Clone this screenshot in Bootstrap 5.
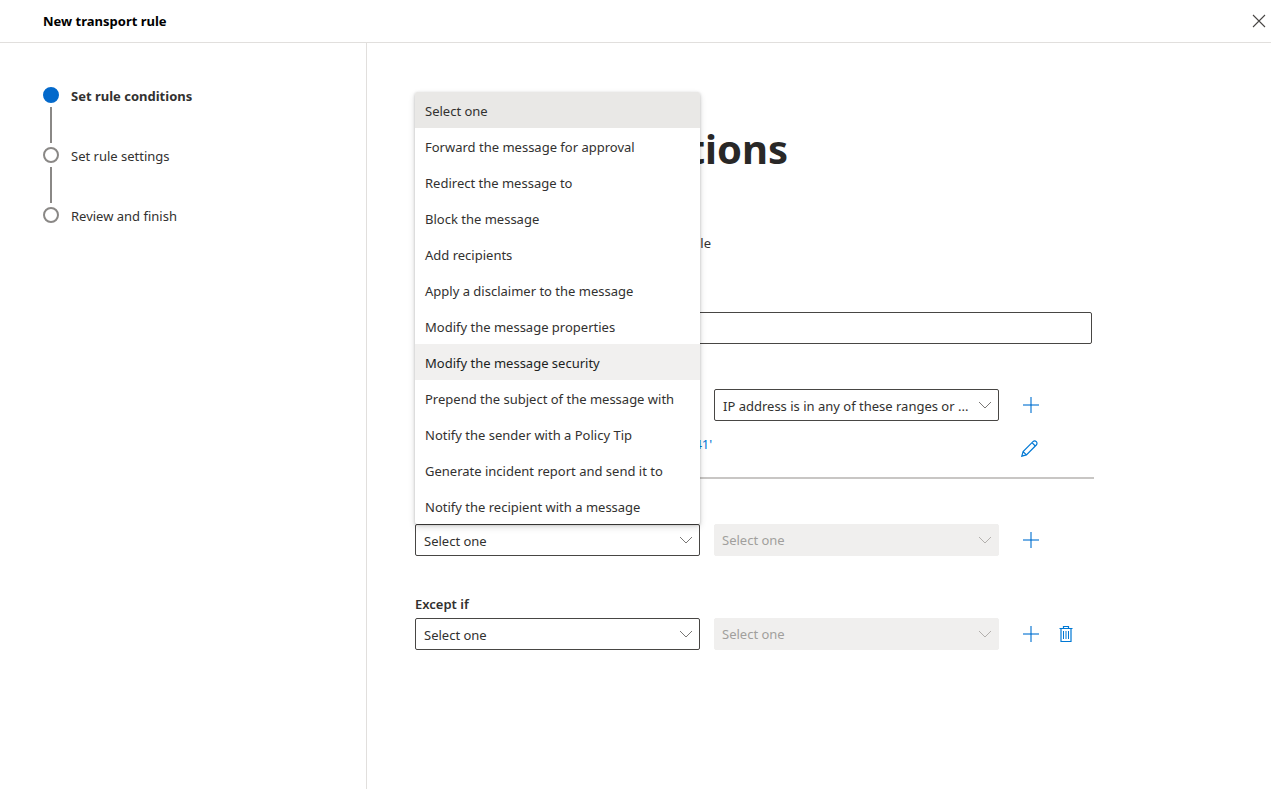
<!DOCTYPE html>
<html lang="en">
<head>
<meta charset="utf-8">
<meta name="viewport" content="width=device-width, initial-scale=1">
<title>New transport rule</title>
<link href="https://cdn.jsdelivr.net/npm/bootstrap@5.3.0/dist/css/bootstrap.min.css" rel="stylesheet">
<style>
  body { font-family: "Noto Sans", "Open Sans", sans-serif; font-size: 13px; line-height: 20px; color: #323130; background: #fff; }
  .topbar { height: 43px; border-bottom: 1px solid #e1dfdd; padding-left: 43px; padding-right: 4px; }
  .topbar h1 { font-size: 13px; line-height: 20px; font-weight: 700; color: #000; }
  .icon-btn { display: flex; padding: 0; border: 0; background: none; color: #0078d4; }
  .icon-btn.dismiss { color: #484644; }
  .sidebar { flex: 0 0 367px; border-right: 1px solid #e1dfdd; padding: 43px 43px 0; }
  .steps li { height: 60px; display: grid; grid-template-columns: 16px 1fr; column-gap: 12px; align-content: start; row-gap: 1px; }
  .steps a { color: #323130; text-decoration: none; }
  .steps .active { font-weight: 700; }
  .dot { width: 16px; height: 16px; margin-top: 1px; border: 2px solid #8a8886; border-radius: 50%; align-self: start; }
  .dot.filled { background: #0369cb; border-color: #0369cb; }
  .steps .bar-line { width: 2px; height: 36px; background: #8a8886; justify-self: center; }
  .pane { padding: 80px 48px 48px; }
  .form-area { max-width: 679px; }
  .form-area h2 { font-size: 40px; line-height: 52px; font-weight: 700; color: #292827; }
  .intro { margin: 58px 0 59px; }
  .field { height: 32px; border: 1px solid #484644; border-radius: 2px; padding: 0 8px; font-size: 13px; line-height: 20px; color: #323130; }
  .name-row { padding-right: 2px; margin-bottom: 45px; }
  .form-select.field { padding: 2px 26px 0 8px; background-size: 14px 14px; background-position: right 6px center;
    background-image: url("data:image/svg+xml,%3Csvg xmlns='http://www.w3.org/2000/svg' viewBox='0 0 14 14'%3E%3Cpath fill='none' stroke='%23797775' d='M1 4l6 6 6-6'/%3E%3C/svg%3E"); }
  .form-select.field:disabled { background-color: #f0efee; border-color: #f0efee; color: #a19f9d; opacity: 1; padding: 0 26px 0 7px;
    background-image: url("data:image/svg+xml,%3Csvg xmlns='http://www.w3.org/2000/svg' viewBox='0 0 14 14'%3E%3Cpath fill='none' stroke='%23b3b0ad' d='M1 4l6 6 6-6'/%3E%3C/svg%3E"); }
  .rule-grid { display: grid; grid-template-columns: 285px 285px 20px 20px; column-gap: 14px; align-items: center; }
  .rule-grid .second { grid-column: 2; }
  .rule-grid .add { justify-self: end; margin-right: -6px; }
  .summary { height: 58px; padding-top: 13px; padding-right: 56px; margin-bottom: 45px; border-bottom: 2px solid #c8c6c4; }
  .summary a { color: #0078d4; text-decoration: none; }
  .summary .icon-btn { padding-top: 6px; }
  .section-label { margin-top: 38px; line-height: 20px; }
  .option-menu { position: absolute; bottom: 100%; left: 0; width: 100%; border-radius: 2px; background: #fff;
    box-shadow: 0 3px 7px rgba(0,0,0,.14), 0 1px 3px rgba(0,0,0,.22); overflow: hidden; z-index: 10; }
  .option-menu .dropdown-item { height: 36px; padding: 2px 10px 0; line-height: 20px; color: #323130; }
  .option-menu .dropdown-item.chosen { background: #e9e8e6; }
  .option-menu .dropdown-item.hovered { background: #f1f0ef; color: #201f1e; }
</style>
</head>
<body class="d-flex flex-column min-vh-100">
<header class="topbar d-flex align-items-center justify-content-between">
  <h1 class="m-0">New transport rule</h1>
  <button class="icon-btn dismiss" type="button" aria-label="Close"><svg width="16" height="16" viewBox="0 0 16 16" fill="none" stroke="currentColor" stroke-width="1.1"><path d="M2 2l12 12M14 2L2 14"/></svg></button>
</header>
<div class="d-flex flex-grow-1">
  <nav class="sidebar">
    <ol class="steps list-unstyled m-0">
      <li><span class="dot filled"></span><a class="active" href="#">Set rule conditions</a><span class="bar-line"></span></li>
      <li><span class="dot"></span><a href="#">Set rule settings</a><span class="bar-line"></span></li>
      <li><span class="dot"></span><a href="#">Review and finish</a></li>
    </ol>
  </nav>
  <main class="pane flex-grow-1">
    <form class="form-area">
      <h2 class="m-0">Set rule conditions</h2>
      <p class="intro">Name, and set conditions for your transport rule</p>
      <div class="name-row"><input class="form-control field" type="text" aria-label="Name"></div>
      <div class="rule-grid">
        <select class="form-select field second" aria-label="Condition"><option>IP address is in any of these ranges or ...</option></select>
        <button class="icon-btn add" type="button" aria-label="Add condition"><svg width="16" height="16" viewBox="0 0 16 16" stroke="#71afe5" stroke-width="2"><path d="M0 8h16M8 0v16"/><path stroke="#2b88d8" d="M7 8h2"/></svg></button>
      </div>
      <div class="summary d-flex justify-content-between">
        <a href="#">Sender's IP addresses in the range '192.168.0.41'</a>
        <button class="icon-btn align-self-start" type="button" aria-label="Edit"><svg width="17" height="17" viewBox="0 0 17 17" fill="none" stroke="currentColor" stroke-width="1.2"><path d="M.8 16.2l1.3-4.6L12 1.7a2.3 2.3 0 0 1 3.3 3.3L5.4 14.9zM2.1 11.6l3.3 3.3M11 2.7L14.3 6"/></svg></button>
      </div>
      <div class="rule-grid">
        <div class="position-relative">
          <select class="form-select field" aria-label="Action"><option>Select one</option></select>
          <div class="option-menu" role="listbox">
            <button type="button" role="option" class="dropdown-item chosen">Select one</button>
            <button type="button" role="option" class="dropdown-item">Forward the message for approval</button>
            <button type="button" role="option" class="dropdown-item">Redirect the message to</button>
            <button type="button" role="option" class="dropdown-item">Block the message</button>
            <button type="button" role="option" class="dropdown-item">Add recipients</button>
            <button type="button" role="option" class="dropdown-item">Apply a disclaimer to the message</button>
            <button type="button" role="option" class="dropdown-item">Modify the message properties</button>
            <button type="button" role="option" class="dropdown-item hovered">Modify the message security</button>
            <button type="button" role="option" class="dropdown-item">Prepend the subject of the message with</button>
            <button type="button" role="option" class="dropdown-item">Notify the sender with a Policy Tip</button>
            <button type="button" role="option" class="dropdown-item">Generate incident report and send it to</button>
            <button type="button" role="option" class="dropdown-item">Notify the recipient with a message</button>
          </div>
        </div>
        <select class="form-select field" disabled aria-label="Action detail"><option>Select one</option></select>
        <button class="icon-btn add" type="button" aria-label="Add action"><svg width="16" height="16" viewBox="0 0 16 16" stroke="#71afe5" stroke-width="2"><path d="M0 8h16M8 0v16"/><path stroke="#2b88d8" d="M7 8h2"/></svg></button>
      </div>
      <label for="except" class="section-label d-block fw-semibold">Except if</label>
      <div class="rule-grid mt-1">
        <select class="form-select field" id="except"><option>Select one</option></select>
        <select class="form-select field" disabled aria-label="Exception detail"><option>Select one</option></select>
        <button class="icon-btn add" type="button" aria-label="Add exception"><svg width="16" height="16" viewBox="0 0 16 16" stroke="#71afe5" stroke-width="2"><path d="M0 8h16M8 0v16"/><path stroke="#2b88d8" d="M7 8h2"/></svg></button>
        <button class="icon-btn add" type="button" aria-label="Delete exception"><svg width="14" height="16" viewBox="0 0 14 16" fill="none" stroke="currentColor"><path stroke-width="1.2" d="M.5 2.5h13M4.500 2V.5h5V2M2 3v12.500h10V3"/><path d="M4.500 5v8M7 5v8M9.500 5v8"/></svg></button>
      </div>
    </form>
  </main>
</div>
<script src="https://cdn.jsdelivr.net/npm/bootstrap@5.3.0/dist/js/bootstrap.bundle.min.js"></script>
</body>
</html>
